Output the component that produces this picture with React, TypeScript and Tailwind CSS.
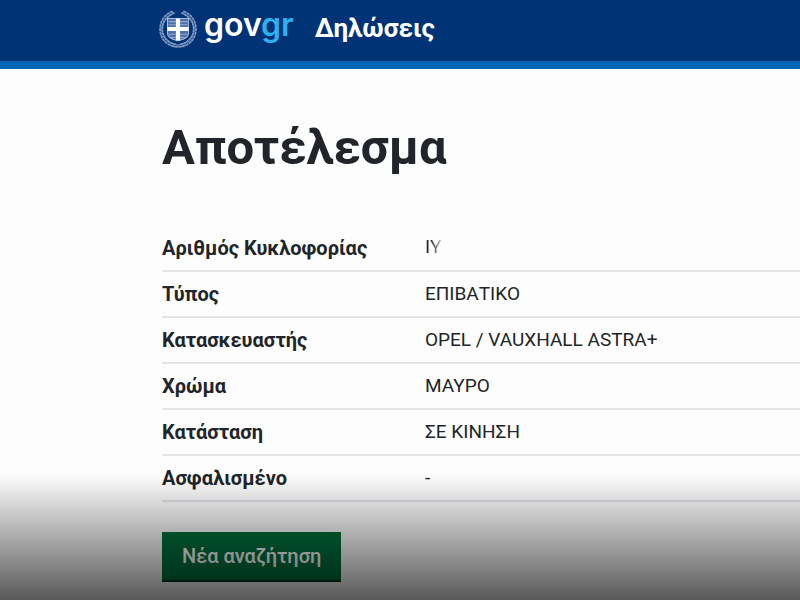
import clsx from 'clsx'

type Detail = {
  label: string
  value: string
  faded?: boolean
}

const details: Detail[] = [
  { faded: true, label: 'Αριθμός Κυκλοφορίας', value: 'ΙΥ' },
  { label: 'Τύπος', value: 'ΕΠΙΒΑΤΙΚΟ' },
  { label: 'Κατασκευαστής', value: 'OPEL / VAUXHALL ASTRA+' },
  { label: 'Χρώμα', value: 'ΜΑΥΡΟ' },
  { label: 'Κατάσταση', value: 'ΣΕ ΚΙΝΗΣΗ' },
  { label: 'Ασφαλισμένο', value: '-' },
]

const Emblem = () => (
  <svg
    aria-hidden="true"
    className="h-10 w-10 shrink-0"
    fill="none"
    viewBox="1 1 38 38"
  >
    {/* Laurel wreath, left and right branch */}
    <g stroke="#7e97c1" strokeLinecap="round">
      <path
        d="M19 37C9 36 3 29 3 20C3 12 8 5 16 3M21 37C31 36 37 29 37 20C37 12 32 5 24 3"
        strokeDasharray="1.5 2"
        strokeWidth="1.8"
      />
      <path
        d="M17 34.500C10 33 5 27 5 20C5 13 10 7 17 4.500M23 34.500C30 33 35 27 35 20C35 13 30 7 23 4.500"
        strokeDasharray="1 2"
        strokeWidth="2"
      />
      <path d="M16 37L24 34M16 34L24 37" strokeWidth="1" />
    </g>
    {/* Shield with the cross */}
    <path
      d="M10 10H30V24C30 28 26 30 20 31C14 30 10 28 10 24Z"
      fill="#4d70a8"
      stroke="#a9bbd8"
      strokeWidth="1"
    />
    <path
      d="M11 13H29M11 16H29M11 25H29M12 28H28"
      stroke="#8fa7cd"
      strokeWidth="1"
    />
    <path d="M18 10H22V18H30V22H22V31H18V22H10V18H18Z" fill="#ffffff" />
  </svg>
)

const Header = () => (
  <header className="border-b-8 border-[#0065b5] bg-[#003375]">
    <div className="flex h-[61px] items-center pb-1 pl-[158px]">
      <a className="flex items-center gap-x-[6px]" href="#home">
        <Emblem />
        <span className="pb-2 font-['Inter',sans-serif] text-[32px] leading-10 font-semibold text-white">
          gov<span className="text-[#2fb0ee]">gr</span>
        </span>
      </a>
      <a
        className="ml-[21px] text-[26px] font-bold text-white"
        href="#services"
      >
        Δηλώσεις
      </a>
    </div>
  </header>
)

const DetailsTable = () => (
  <table className="mt-[49px] w-full text-left">
    <tbody>
      {details.map(({ faded, label, value }) => (
        <tr className="h-[46px] border-b-2 border-[#e3e4e7]" key={label}>
          <th className="w-[263px] text-xl font-bold" scope="row">
            {label}
          </th>
          <td className="text-[19px]">
            <span
              className={clsx(
                faded &&
                  'bg-linear-to-r from-[#212529] from-30% to-[#c4c4c4] bg-clip-text text-transparent',
              )}
            >
              {value}
            </span>
          </td>
        </tr>
      ))}
    </tbody>
  </table>
)

export default function App() {
  return (
    <div className="relative min-h-screen bg-[#fdfdfd] font-['Roboto',sans-serif] text-[#212529]">
      <Header />
      <main className="pt-[51px] pb-[18px] pl-[162px]">
        <h1 className="text-[49px] leading-14 font-bold">Αποτέλεσμα</h1>
        <DetailsTable />
        <button
          className="mt-[30px] h-[50px] border-b-2 border-[#003618] bg-[#00703c] px-5 text-xl font-medium text-white"
          type="button"
        >
          Νέα αναζήτηση
        </button>
      </main>
      {/* Shade over the foot of the page */}
      <div className="pointer-events-none absolute inset-x-0 bottom-0 h-[126px] bg-linear-to-b from-black/0 to-black/65" />
    </div>
  )
}
